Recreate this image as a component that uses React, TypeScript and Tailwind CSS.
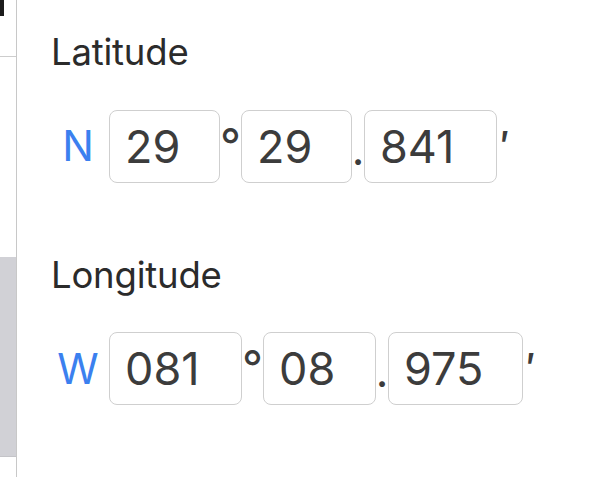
const Field = ({ value, width }: { value: string; width: string }) => (
  <div className={`${width} h-[73px] flex items-center pl-[15px] rounded-[8px] border border-[#cfcfcf] bg-white text-[45px] text-[#3c3c3c] leading-none`}>
    {value}
  </div>
);

const Coord = ({
  label,
  dir,
  deg,
  min,
  dec,
}: {
  label: string;
  dir: string;
  deg: [string, string];
  min: [string, string];
  dec: [string, string];
}) => (
  <div>
    <h3 className="text-[36.5px] leading-none text-[#2b2b2b] tracking-[-0.2px]">{label}</h3>
    <div className="flex items-center mt-[39px]">
      <span className="w-[54px] text-center text-[42px] text-[#3b80ef] leading-none mr-[4px]">{dir}</span>
      <Field value={deg[0]} width={deg[1]} />
      <span className="w-[21px] self-start pt-[12px] text-center text-[46px] text-[#3c3c3c] leading-none">°</span>
      <Field value={min[0]} width={min[1]} />
      <span className="w-[12px] self-end pb-[12px] text-center text-[40px] font-medium text-[#3c3c3c] leading-none">.</span>
      <Field value={dec[0]} width={dec[1]} />
      <span className="self-start pt-[16px] pl-[3px] text-[40px] font-medium text-[#3c3c3c] leading-none">′</span>
    </div>
  </div>
);

const App = () => {
  return (
    <div className="w-[605px] h-[477px] bg-white flex overflow-hidden" style={{ fontFamily: "Inter, 'Noto Sans', sans-serif" }}>
      <aside className="w-[17px] h-full border-r border-[#c8c8c8] flex flex-col">
        <div className="h-[57px] border-b border-[#cdcdcd] relative">
          <div className="absolute left-0 top-0 w-[4px] h-[16px] bg-[#1c1c1c]" />
        </div>
        <div className="h-[200px]" />
        <div className="h-[200px] bg-[#d1d1d6] border-b border-[#c4c4c8]" />
      </aside>
      <main className="flex-1 pl-[34px] pt-[34px] flex flex-col gap-[74px]">
        <Coord label="Latitude" dir="N" deg={["29", "w-[111px]"]} min={["29", "w-[111px]"]} dec={["841", "w-[133px]"]} />
        <Coord label="Longitude" dir="W" deg={["081", "w-[133px]"]} min={["08", "w-[113px]"]} dec={["975", "w-[135px]"]} />
      </main>
    </div>
  );
};

export default App;
